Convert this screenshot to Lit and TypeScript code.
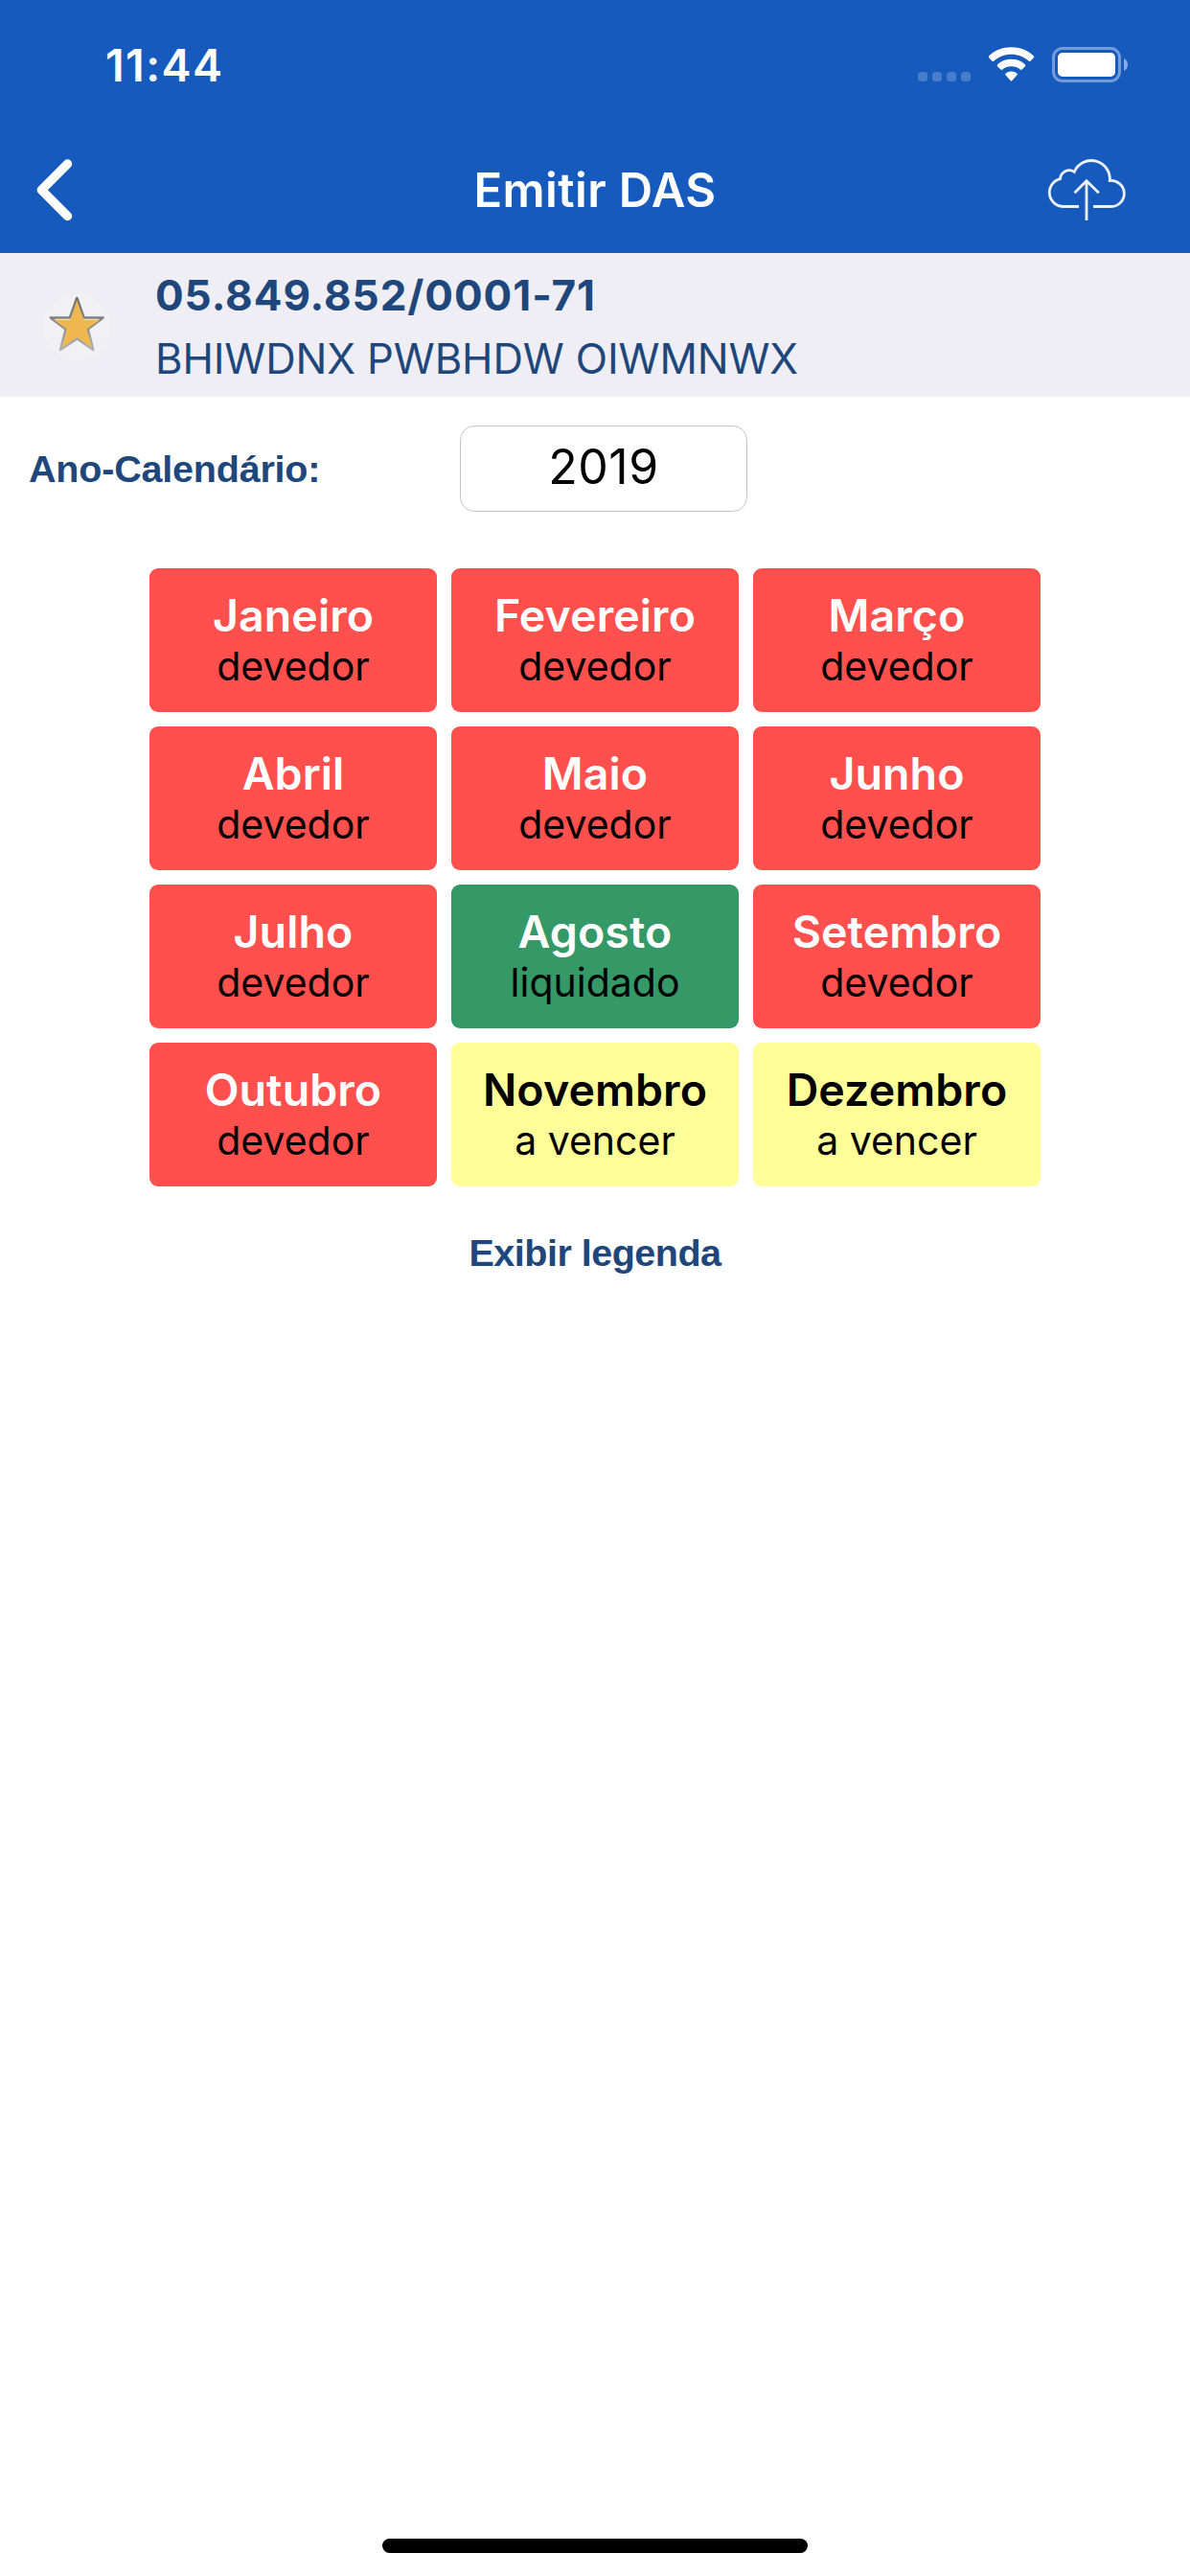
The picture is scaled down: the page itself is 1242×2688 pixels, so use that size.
import { LitElement, html, css } from "lit";
import { customElement, property } from "lit/decorators.js";

type Situation = "devedor" | "liquidado" | "a vencer";

interface Month {
  name: string;
  situation: Situation;
}

const MONTHS: Month[] = [
  { name: "Janeiro", situation: "devedor" },
  { name: "Fevereiro", situation: "devedor" },
  { name: "Março", situation: "devedor" },
  { name: "Abril", situation: "devedor" },
  { name: "Maio", situation: "devedor" },
  { name: "Junho", situation: "devedor" },
  { name: "Julho", situation: "devedor" },
  { name: "Agosto", situation: "liquidado" },
  { name: "Setembro", situation: "devedor" },
  { name: "Outubro", situation: "devedor" },
  { name: "Novembro", situation: "a vencer" },
  { name: "Dezembro", situation: "a vencer" },
];

const TONE: Record<Situation, string> = {
  devedor: "due",
  liquidado: "paid",
  "a vencer": "upcoming",
};

@customElement("status-bar")
export class StatusBar extends LitElement {
  static styles = css`
    :host {
      display: flex;
      justify-content: space-between;
      align-items: flex-start;
      box-sizing: border-box;
      height: 132px;
      padding: 38px 65px 0 110px;
      color: #fff;
    }
    .time {
      font-size: 46.6px;
      font-weight: 600;
      line-height: 60px;
      letter-spacing: 1.4px;
    }
    .icons {
      display: flex;
      padding-top: 11px;
    }
    .signal {
      display: flex;
      gap: 5px;
      margin-top: 26px;
    }
    .dot {
      width: 10px;
      height: 10px;
      border-radius: 3.5px;
      background: rgba(255, 255, 255, 0.21);
    }
    svg {
      display: block;
    }
    .wifi,
    .battery {
      margin-left: 18px;
    }
  `;

  render() {
    return html`
      <div class="time">11:44</div>
      <div class="icons">
        <div class="signal">
          <div class="dot"></div>
          <div class="dot"></div>
          <div class="dot"></div>
          <div class="dot"></div>
        </div>
        <svg class="wifi" width="49" height="37" viewBox="0 0 49 37" fill="#fff">
          <path d="M1.2 9.2Q.2 10.3 1.2 11.3L4.5 14.7Q5.3 15.5 6.3 14.7C11.3 10.2 17.6 7.8 24.5 7.8S37.7 10.2 42.7 14.7Q43.7 15.5 44.5 14.7L47.8 11.3Q48.8 10.3 47.8 9.2C41.5 3.5 33.3.3 24.5.3S7.5 3.5 1.2 9.2z" />
          <path d="M10.1 18.2Q9.2 19.2 10.1 20.2L13.4 23.5Q14.3 24.4 15.3 23.5C17.9 21.3 21 20.2 24.5 20.2S31.1 21.3 33.7 23.5Q34.7 24.4 35.6 23.5L38.9 20.2Q39.8 19.2 38.9 18.2C34.900 14.6 30 12.8 24.5 12.8S14.1 14.6 10.1 18.2z" />
          <path d="M18.6 27.6Q17.7 28.6 18.7 29.6L23.6 34.9Q24.5 35.9 25.4 34.9L30.3 29.6Q31.3 28.6 30.4 27.6C28.7 26.2 26.7 25.5 24.5 25.5S20.3 26.2 18.6 27.6z" />
        </svg>
        <svg class="battery" width="79" height="37" viewBox="0 0 79 37">
          <rect x="1.5" y="1.5" width="69" height="34" rx="9.5" fill="none" stroke="#fff" stroke-opacity=".4" stroke-width="3" />
          <rect x="6" y="6" width="60" height="25" rx="5" fill="#fff" />
          <path d="M75 12c5.3 2.5 5.3 10.5 0 13z" fill="#fff" fill-opacity=".5" />
        </svg>
      </div>
    `;
  }
}

@customElement("nav-bar")
export class NavBar extends LitElement {
  @property() heading = "";

  static styles = css`
    :host {
      display: grid;
      grid-template-columns: 160px 1fr 160px;
      align-items: center;
      height: 132px;
      color: #fff;
    }
    svg {
      display: block;
    }
    .back {
      margin-left: 36px;
    }
    .upload {
      margin-left: 10px;
    }
    .title {
      padding-top: 1px;
      text-align: center;
      font-size: 49px;
      font-weight: 600;
      line-height: 60px;
      letter-spacing: 0.4px;
    }
  `;

  render() {
    return html`
      <svg class="back" width="42" height="66" viewBox="0 0 42 66" fill="none" stroke="#fff" stroke-width="9.4" stroke-linecap="round" stroke-linejoin="round">
        <path d="M34.5 6L7.3 33.3L34.5 60.5" />
      </svg>
      <div class="title">${this.heading}</div>
      <svg class="upload" width="86" height="76" viewBox="12 5 86 76" fill="none" stroke="#fff" stroke-opacity=".92" stroke-width="2.8">
        <path d="M46 60.5H30A14.6 14.6 0 0 1 26.5 31.7A9.5 9.5 0 0 1 41.3 24.3A19.3 19.3 0 0 1 78.3 33.5A13.54 13.54 0 1 1 80 60.5H61" />
        <path d="M54 75V34M41.5 46.2L54 33.7L66.8 46.2" />
      </svg>
    `;
  }
}

@customElement("company-bar")
export class CompanyBar extends LitElement {
  static styles = css`
    :host {
      display: flex;
      box-sizing: border-box;
      height: 150px;
      background: #efeef4;
      color: #20477b;
    }
    .star {
      display: block;
      margin: 36px 0 0 40px;
      transform: translateX(-20px);
    }
    .star {
      margin-left: 40px;
      transform: none;
    }
    .lines {
      display: flex;
      flex-direction: column;
      padding-top: 11px;
      margin-left: 42px;
    }
    .cnpj,
    .name {
      white-space: nowrap;
    }
    .cnpj {
      font-size: 44px;
      font-weight: 700;
      line-height: 66px;
      letter-spacing: 0.95px;
    }
    .name {
      font-size: 43.6px;
      line-height: 67px;
      letter-spacing: -0.1px;
    }
  `;

  render() {
    return html`
      <svg class="star" width="80" height="80" viewBox="20 10 80 80">
        <defs>
          <linearGradient id="edge" x1="0" y1="0" x2="0" y2="1">
            <stop offset="0" stop-color="#727272" />
            <stop offset=".45" stop-color="#858585" />
            <stop offset="1" stop-color="#b2b2b2" />
          </linearGradient>
        </defs>
        <circle cx="60.3" cy="51" r="35" fill="#f1f0f3" />
        <path d="M60.3 21L67.6 41.5H87.5L71.7 53.5L77.3 75L60.3 63.3L43 75L48.7 53.5L32.7 41.5H53z" fill="#fdeecb" stroke="url(#edge)" stroke-width="2.6" stroke-linejoin="round" />
        <path d="M60.3 23.5L67.3 43.8H84.5L70.5 53.6L76 72.5L60.3 62L44.8 72.5L50 53.6L36 43.8H53.5z" fill="#eeb84f" />
      </svg>
      <div class="lines">
        <div class="cnpj">05.849.852/0001-71</div>
        <div class="name">BHIWDNX PWBHDW OIWMNWX</div>
      </div>
    `;
  }
}

@customElement("month-tile")
export class MonthTile extends LitElement {
  @property() name = "";
  @property() situation: Situation = "devedor";

  static styles = css`
    :host {
      display: block;
    }
    .tile {
      box-sizing: border-box;
      height: 149.6px;
      padding-top: 19px;
      border-radius: 9px;
      text-align: center;
      color: #fff;
    }
    .due {
      background: #ff504e;
    }
    .paid {
      background: #349966;
    }
    .upcoming {
      background: #fffe99;
      color: #000;
    }
    .name {
      font-size: 46.5px;
      font-weight: 600;
      line-height: 60px;
      letter-spacing: 0.1px;
    }
    .situation {
      font-size: 41px;
      line-height: 47px;
      color: #000;
    }
  `;

  render() {
    return html`
      <div class="tile ${TONE[this.situation]}">
        <div class="name">${this.name}</div>
        <div class="situation">${this.situation}</div>
      </div>
    `;
  }
}

@customElement("app-root")
export class AppRoot extends LitElement {
  static styles = css`
    :host {
      display: flex;
      flex-direction: column;
      height: 2688px;
      background: #fff;
      font-family: Inter, "Liberation Sans", sans-serif;
    }
    .header {
      background: #165abe;
    }
    .year-row {
      display: flex;
      align-items: center;
      margin-top: 30px;
      height: 90px;
      padding-left: 30px;
    }
    .label {
      width: 450px;
      font: 700 39.5px / 48px "Liberation Sans", Arial, sans-serif;
      letter-spacing: -0.2px;
      color: #20477b;
    }
    .year {
      box-sizing: border-box;
      width: 300px;
      height: 90px;
      border: 1px solid #c4c4c4;
      border-radius: 15px;
      text-align: center;
      font-size: 50px;
      line-height: 84px;
      letter-spacing: 0.5px;
      color: #000;
    }
    .months {
      display: grid;
      grid-template-columns: repeat(3, 300px);
      grid-auto-rows: 150px;
      gap: 15px;
      justify-content: center;
      margin-top: 59px;
    }
    .legend {
      margin-top: 44px;
      text-align: center;
      font: 700 39.5px / 50px "Liberation Sans", Arial, sans-serif;
      letter-spacing: -0.5px;
      color: #20477b;
    }
    .home {
      width: 444px;
      height: 15px;
      margin: auto auto 24px;
      border-radius: 7.5px;
      background: #000;
    }
  `;

  render() {
    return html`
      <div class="header">
        <status-bar></status-bar>
        <nav-bar heading="Emitir DAS"></nav-bar>
      </div>
      <company-bar></company-bar>
      <div class="year-row">
        <div class="label">Ano-Calendário:</div>
        <div class="year">2019</div>
      </div>
      <div class="months">
        ${MONTHS.map(
          (m) => html`<month-tile .name=${m.name} .situation=${m.situation}></month-tile>`,
        )}
      </div>
      <div class="legend">Exibir legenda</div>
      <div class="home"></div>
    `;
  }
}
